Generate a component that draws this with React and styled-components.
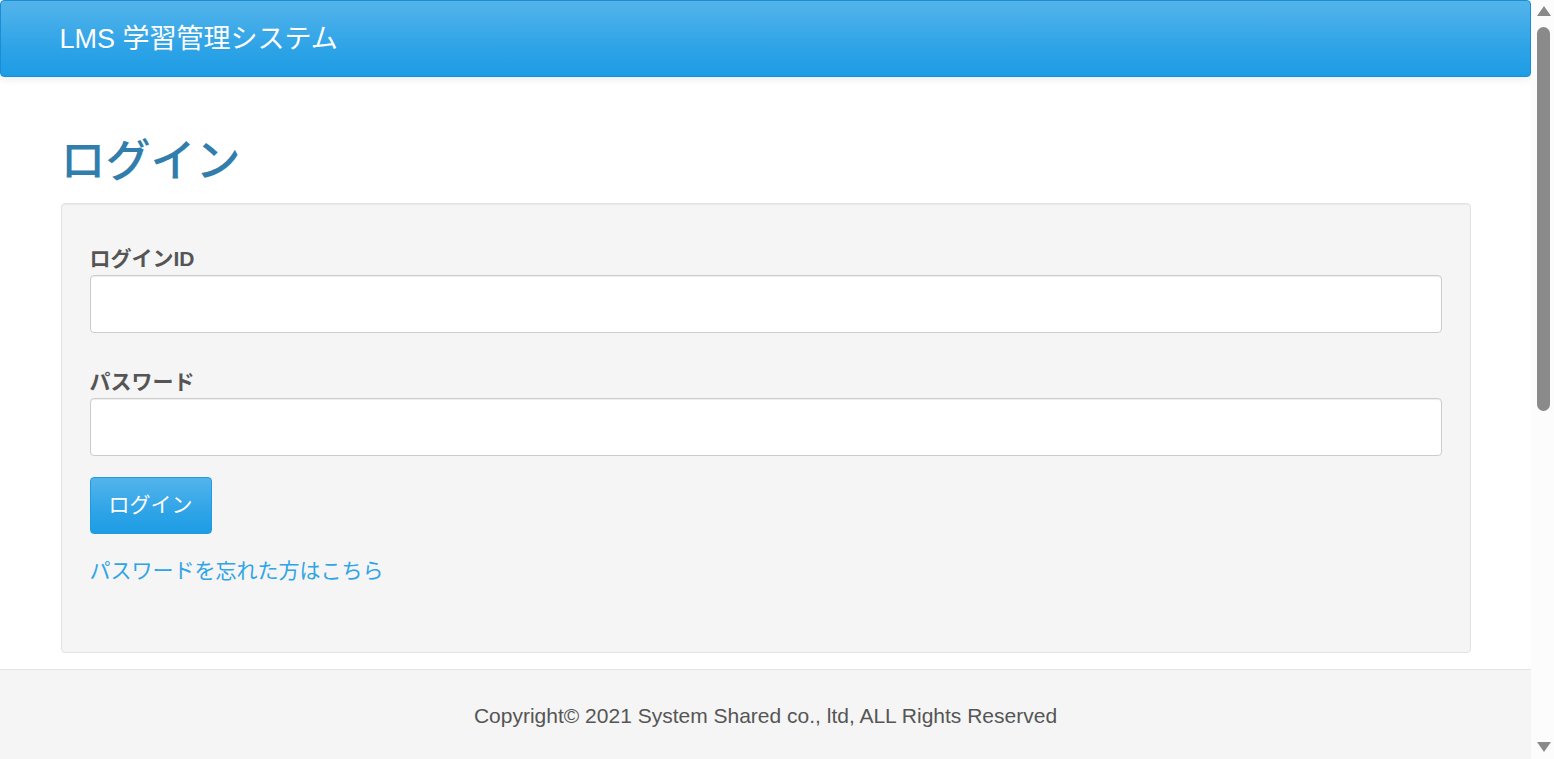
import styled, { createGlobalStyle } from 'styled-components';

const GlobalStyle = createGlobalStyle`
  html, body {
    margin: 0;
    padding: 0;
    background: #fff;
  }
  body {
    font-family: "Liberation Sans", Arial, "Noto Sans CJK JP", sans-serif;
    font-size: 21px;
    line-height: 1.43;
    color: #555;
  }
  * {
    box-sizing: border-box;
  }
`;

const Page = styled.div`
  margin-right: 23px;
`;

const Navbar = styled.header`
  height: 77px;
  padding-top: 2px;
  border: 1px solid #1b8ed3;
  border-radius: 4px;
  background-image: linear-gradient(#54b4eb, #2fa4e7 60%, #1d9ce5);
  box-shadow: 0 1px 10px rgba(0, 0, 0, 0.1);
  display: flex;
  align-items: center;
`;

const Container = styled.div`
  width: 1410px;
  margin: 0 auto;
`;

const Brand = styled.a`
  display: block;
  margin-left: -1px;
  font-size: 27px;
  color: #fff;
  text-decoration: none;
  text-shadow: 0 1px 0 rgba(0, 0, 0, 0.05);
`;

const Main = styled.main`
  padding-top: 60px;
`;

const Title = styled.h1`
  margin: 0 0 16px;
  font-size: 45px;
  font-weight: 500;
  line-height: 1.1;
  color: #317eac;
`;

const Well = styled.section`
  background: #f5f5f5;
  border: 1px solid #e3e3e3;
  border-radius: 4px;
  box-shadow: inset 0 1px 1px rgba(0, 0, 0, 0.05);
  padding: 40px 28px 66px;
`;

const FormGroup = styled.div`
  margin-bottom: ${(p) => p.$gap || '34px'};
`;

const Label = styled.label`
  display: block;
  margin-bottom: 1px;
  font-weight: bold;
  color: #555;
`;

const Input = styled.input`
  display: block;
  width: 100%;
  height: 58px;
  padding: 8px 14px;
  font: inherit;
  color: #555;
  background: #fff;
  border: 1px solid #ccc;
  border-radius: 4px;
  box-shadow: inset 0 1px 1px rgba(0, 0, 0, 0.075);
  outline: none;
`;

const Button = styled.button`
  display: block;
  height: 57px;
  padding: 0 18px;
  font: inherit;
  color: #fff;
  border: 1px solid #1f9be4;
  border-radius: 4px;
  background-image: linear-gradient(#54b4eb, #2fa4e7 60%, #1d9ce5);
  text-shadow: 0 1px 0 rgba(0, 0, 0, 0.05);
  cursor: pointer;
`;

const ForgotLink = styled.a`
  display: inline-block;
  margin-top: 22px;
  color: #2fa4e7;
  text-decoration: none;
`;

const Footer = styled.footer`
  margin-top: 16px;
  min-height: 760px;
  padding-top: 31px;
  background: #f5f5f5;
  border-top: 1px solid #e3e3e3;
  text-align: center;
  color: #555;
`;

/* fake browser scrollbar drawn over the right edge */
const Scrollbar = styled.div`
  position: fixed;
  top: 0;
  right: 0;
  width: 23px;
  height: 100vh;
  background: #fcfcfc;
  display: flex;
  flex-direction: column;
  align-items: center;
  padding: 6px 0 7px 2px;
`;

const Arrow = styled.span`
  width: 0;
  height: 0;
  border-left: 7px solid transparent;
  border-right: 7px solid transparent;
  ${(p) =>
    p.$down
      ? 'border-top: 10px solid #8a8a8a; margin-top: auto;'
      : 'border-bottom: 10px solid #8a8a8a;'}
`;

const Thumb = styled.span`
  width: 13px;
  height: 384px;
  margin-top: 11px;
  border-radius: 7px;
  background: #8a8a8a;
`;

export default function App() {
  return (
    <>
      <GlobalStyle />
      <Page>
        <Navbar>
          <Container>
            <Brand href="#">LMS 学習管理システム</Brand>
          </Container>
        </Navbar>
        <Main>
          <Container>
            <Title>ログイン</Title>
            <Well>
              <form onSubmit={(e) => e.preventDefault()}>
                <FormGroup>
                  <Label htmlFor="loginId">ログインID</Label>
                  <Input id="loginId" type="text" />
                </FormGroup>
                <FormGroup $gap="21px">
                  <Label htmlFor="password">パスワード</Label>
                  <Input id="password" type="password" />
                </FormGroup>
                <Button type="submit">ログイン</Button>
                <ForgotLink href="#">パスワードを忘れた方はこちら</ForgotLink>
              </form>
            </Well>
          </Container>
        </Main>
        <Footer>Copyright© 2021 System Shared co., ltd, ALL Rights Reserved</Footer>
      </Page>
      <Scrollbar aria-hidden="true">
        <Arrow />
        <Thumb />
        <Arrow $down />
      </Scrollbar>
    </>
  );
}
